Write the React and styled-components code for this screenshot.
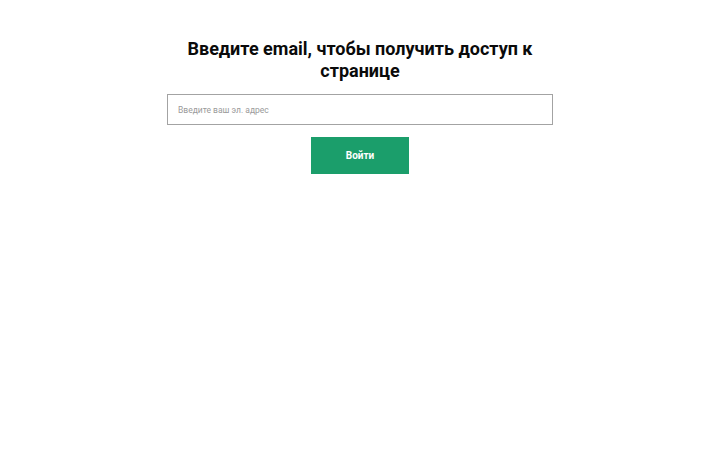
import React from 'react';
import styled, { createGlobalStyle } from 'styled-components';

const GlobalStyle = createGlobalStyle`
  body {
    margin: 0;
    background: #fff;
    font-family: Roboto, 'Liberation Sans', sans-serif;
  }
`;

const Page = styled.main`
  display: flex;
  justify-content: center;
  padding-top: 38px;
`;

const Form = styled.form`
  width: 386px;
  display: flex;
  flex-direction: column;
  align-items: center;
`;

const Title = styled.h1`
  margin: 0 0 12px;
  font-size: 18px;
  line-height: 22px;
  font-weight: 700;
  color: #0a0a0a;
  text-align: center;
`;

const EmailInput = styled.input`
  box-sizing: border-box;
  width: 100%;
  height: 31px;
  padding: 0 10px;
  border: 1px solid #a3a3a3;
  border-radius: 0;
  font-family: Roboto, 'Liberation Sans', sans-serif;
  font-size: 8.5px;
  color: #333;
  outline: none;

  &::placeholder {
    color: #9a9a9a;
  }
`;

const SubmitButton = styled.button`
  margin-top: 12px;
  width: 98px;
  height: 37px;
  border: none;
  background: #1b9e6b;
  color: #fff;
  font-family: Roboto, 'Liberation Sans', sans-serif;
  font-size: 10px;
  font-weight: 700;
  cursor: pointer;
`;

export default function App() {
  return (
    <>
      <GlobalStyle />
      <Page>
        <Form onSubmit={(e) => e.preventDefault()}>
          <Title>Введите email, чтобы получить доступ к странице</Title>
          <EmailInput type="email" placeholder="Введите ваш эл. адрес" />
          <SubmitButton type="submit">Войти</SubmitButton>
        </Form>
      </Page>
    </>
  );
}
